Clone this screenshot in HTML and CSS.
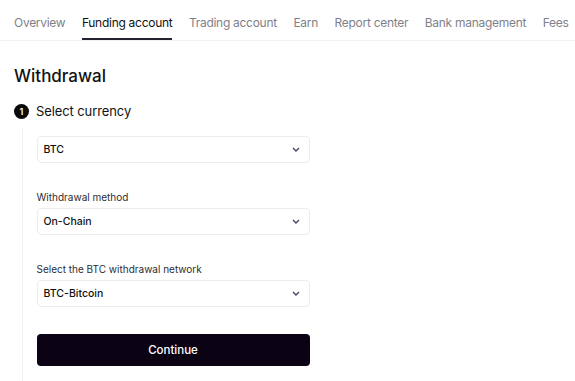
FILE: index.html
```html
<!DOCTYPE html>
<html lang="en">
<head>
<meta charset="utf-8">
<title>Withdrawal</title>
<link rel="stylesheet" href="styles.css">
</head>
<body>
<nav class="tabs">
  <a class="tab">Overview</a>
  <a class="tab active">Funding account</a>
  <a class="tab">Trading account</a>
  <a class="tab">Earn</a>
  <a class="tab">Report center</a>
  <a class="tab">Bank management</a>
  <a class="tab">Fees</a>
</nav>
<main class="page">
  <h1 class="title">Withdrawal</h1>
  <div class="step-head">
    <span class="step-num">1</span>
    <span class="step-title">Select currency</span>
  </div>
  <div class="step-body">
    <div class="select">
      <span>BTC</span>
      <svg class="chev" width="8" height="5" viewBox="0 0 8 5"><path d="M1 1l3 3 3-3" fill="none" stroke="#4a4660" stroke-width="1.4"/></svg>
    </div>
    <label class="field-label">Withdrawal method</label>
    <div class="select">
      <span>On-Chain</span>
      <svg class="chev" width="8" height="5" viewBox="0 0 8 5"><path d="M1 1l3 3 3-3" fill="none" stroke="#4a4660" stroke-width="1.4"/></svg>
    </div>
    <label class="field-label">Select the BTC withdrawal network</label>
    <div class="select">
      <span>BTC-Bitcoin</span>
      <svg class="chev" width="8" height="5" viewBox="0 0 8 5"><path d="M1 1l3 3 3-3" fill="none" stroke="#4a4660" stroke-width="1.4"/></svg>
    </div>
    <button class="btn">Continue</button>
  </div>
</main>
</body>
</html>
```
FILE: styles.css
```css
* { box-sizing: border-box; }
html, body { margin: 0; background: #fff; }
body {
  font-family: "Inter", "Noto Sans", sans-serif;
  color: #121212;
  overflow: hidden;
  height: 381px;
}
.tabs {
  display: flex;
  gap: 16.5px;
  padding: 0 8px 0 14px;
  height: 41px;
  border-bottom: 1px solid #f2f2f4;
  white-space: nowrap;
}
.tab {
  font-size: 12px;
  color: #7f7f8a;
  padding-top: 7px;
  line-height: 31px;
  height: 40px;
  letter-spacing: -0.28px;
}
.tab.active {
  color: #121212;
  border-bottom: 2px solid #222230;
}
.page { padding: 0 14px; }
.title {
  margin: 24px 0 0;
  font-size: 17px;
  font-weight: 500;
  line-height: 22px;
  color: #121212;
}
.step-head {
  display: flex;
  align-items: center;
  gap: 7px;
  margin-top: 16px;
  height: 16px;
}
.step-num {
  width: 15px;
  height: 15px;
  border-radius: 50%;
  background: #0a0a0a;
  color: #fff;
  font-size: 9px;
  font-weight: 600;
  display: flex;
  align-items: center;
  justify-content: center;
}
.step-title { font-size: 13px; color: #121212; letter-spacing: -0.1px; }
.step-body {
  margin: 8px 0 0 7.5px;
  padding: 9px 0 20px 14px;
  border-left: 1px solid #f0f0f2;
  width: 288px;
  display: flex;
  flex-direction: column;
}
.select {
  height: 27px;
  border: 1px solid #ececef;
  border-radius: 4px;
  display: flex;
  align-items: center;
  justify-content: space-between;
  padding: 0 9px 0 6px;
  font-size: 10.5px;
  font-weight: 500;
  color: #121212;
}
.field-label {
  font-size: 10px;
  color: #2d2d33;
  margin-top: 27px;
  margin-bottom: 4px;
  line-height: 14px;
}
.btn {
  margin-top: 27px;
  height: 32px;
  background: #0b0213;
  color: #fff;
  border: 0;
  border-radius: 4px;
  font-family: inherit;
  font-size: 11.5px;
  font-weight: 500;
}
```
